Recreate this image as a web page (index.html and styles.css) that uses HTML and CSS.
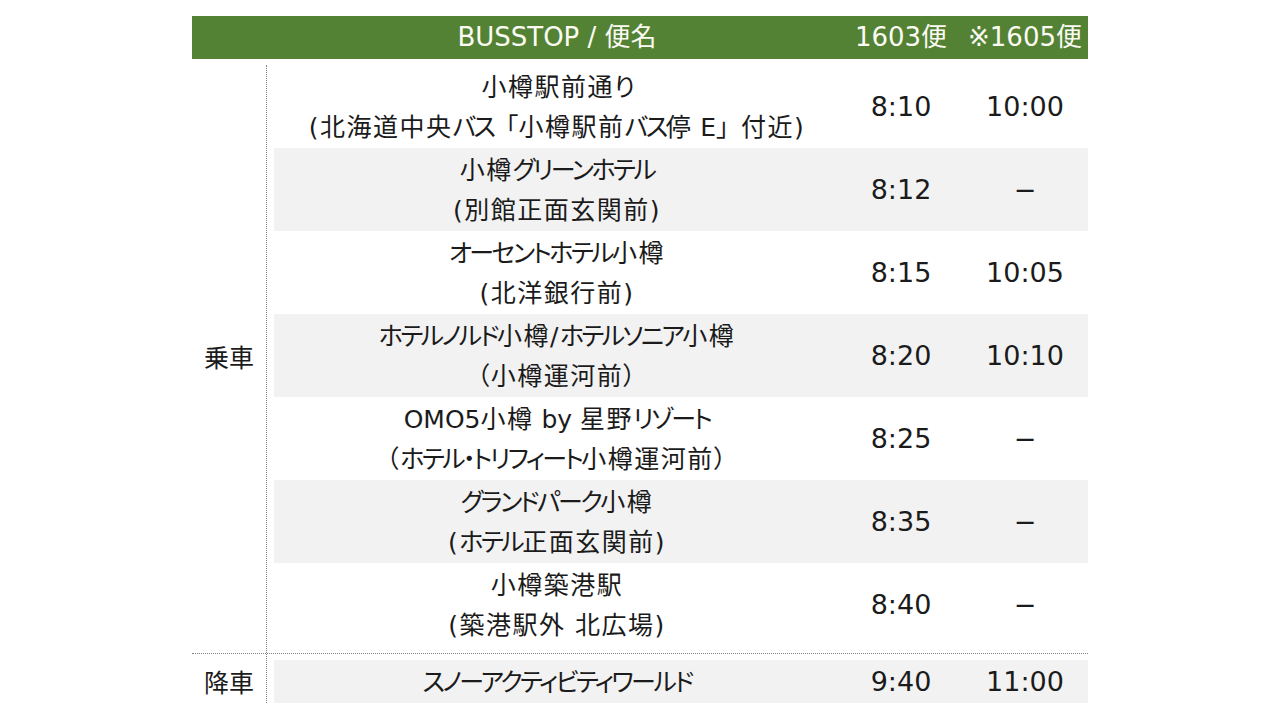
FILE: index.html
```html
<!DOCTYPE html>
<html lang="ja">
<head>
<meta charset="utf-8">
<title>BUSSTOP / 便名</title>
<link rel="stylesheet" href="styles.css">
</head>
<body>
<div class="timetable">
  <div class="head">
    <div class="hcell"></div>
    <div class="hcell">BUSSTOP / 便名</div>
    <div class="hcell">1603便</div>
    <div class="hcell">※1605便</div>
  </div>

  <div class="group group-board">
    <div class="label">乗車</div>
    <div class="rows">
      <div class="row">
        <div class="name"><span class="line">小樽駅前通<span class="k">り</span></span><span class="line">(北海道中央<span class="k">バス</span><span class="fw">「</span>小樽駅前<span class="k">バス</span>停<span class="l"> E</span><span class="fw">」</span>付近)</span></div>
        <div class="time">8:10</div>
        <div class="time">10:00</div>
      </div>
      <div class="row alt">
        <div class="name"><span class="line">小樽<span class="k">グリーンホテル</span></span><span class="line">(別館正面玄関前)</span></div>
        <div class="time">8:12</div>
        <div class="time">−</div>
      </div>
      <div class="row">
        <div class="name"><span class="line"><span class="k">オーセントホテル</span>小樽</span><span class="line">(北洋銀行前)</span></div>
        <div class="time">8:15</div>
        <div class="time">10:05</div>
      </div>
      <div class="row alt">
        <div class="name"><span class="line"><span class="k">ホテルノルド</span>小樽/<span class="k">ホテルソニア</span>小樽</span><span class="line">（小樽運河前）</span></div>
        <div class="time">8:20</div>
        <div class="time">10:10</div>
      </div>
      <div class="row">
        <div class="name"><span class="line"><span class="l">OMO5</span>小樽<span class="l"> by </span>星野<span class="k">リゾート</span></span><span class="line">（<span class="k">ホテル・トリフィート</span>小樽運河前）</span></div>
        <div class="time">8:25</div>
        <div class="time">−</div>
      </div>
      <div class="row alt">
        <div class="name"><span class="line"><span class="k">グランドパーク</span>小樽</span><span class="line">(<span class="k">ホテル</span>正面玄関前)</span></div>
        <div class="time">8:35</div>
        <div class="time">−</div>
      </div>
      <div class="row">
        <div class="name"><span class="line">小樽築港駅</span><span class="line">(築港駅外 北広場)</span></div>
        <div class="time">8:40</div>
        <div class="time">−</div>
      </div>
    </div>
  </div>

  <div class="group group-alight">
    <div class="label">降車</div>
    <div class="rows">
      <div class="row alt">
        <div class="name"><span class="line"><span class="k">スノーアクティビティワールド</span></span></div>
        <div class="time">9:40</div>
        <div class="time">11:00</div>
      </div>
    </div>
  </div>
</div>
</body>
</html>
```

FILE: styles.css
```css
html, body {
  margin: 0;
  padding: 0;
  background: #ffffff;
}

body {
  font-family: "DejaVu Sans", "Noto Sans CJK JP", sans-serif;
  color: #1b1b1b;
}

.timetable {
  width: 896px;
  margin: 16px 0 0 192px;
}

.head {
  display: grid;
  grid-template-columns: 82px 566px 122px 126px;
  height: 43px;
  background: #548235;
  color: #fbfbf3;
  font-size: 26px;
  line-height: 43px;
  text-align: center;
  white-space: nowrap;
}

.group {
  display: flex;
}

.group-board {
  margin-top: 6px;
}

.group-alight {
  border-top: 1px dotted #858585;
}

.label {
  width: 74px;
  flex: none;
  border-right: 1px dotted #858585;
  display: flex;
  align-items: center;
  justify-content: center;
  font-size: 25px;
}

.group-board .label {
  padding-bottom: 6px;
}

.group-alight .label {
  padding-top: 4px;
}

.rows {
  flex: 1;
  padding: 0 0 7px 7px;
}

.group-alight .rows {
  padding: 6px 0 0 7px;
}

.row {
  display: grid;
  grid-template-columns: 566px 122px 126px;
}

.row.alt {
  background: #f2f2f2;
}

.name {
  display: flex;
  flex-direction: column;
  align-items: center;
  padding-top: 3px;
  font-size: 25px;
  line-height: 40px;
  letter-spacing: 1.5px;
  font-feature-settings: "palt";
  white-space: nowrap;
}

.line {
  display: block;
}

.k {
  letter-spacing: -2.5px;
}

.l {
  letter-spacing: 0;
}

.fw {
  font-feature-settings: normal;
  letter-spacing: 0;
}

.time {
  display: flex;
  align-items: center;
  justify-content: center;
  font-size: 27px;
}
```
